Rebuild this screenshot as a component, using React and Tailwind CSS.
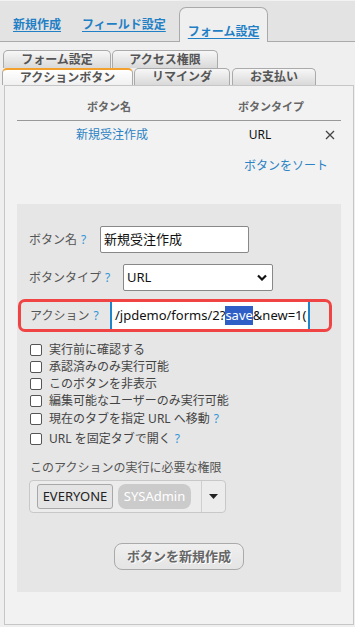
import React from "react";

function Help() {
  return <span className="text-[#2f95d6] ml-[4px]">?</span>;
}

function Check({ children, h }) {
  return (
    <div className={`flex items-center ${h}`}>
      <span className="w-[12px] h-[12px] border border-[#555] rounded-[2px] bg-white shrink-0" />
      <span className="ml-[7px] text-[12px] leading-[16px] text-[#444]">{children}</span>
    </div>
  );
}

export default function App() {
  return (
    <div className="w-[355px] h-[627px] bg-[#efefef] font-['Noto_Sans','Noto_Sans_CJK_JP',sans-serif] overflow-hidden">
      {/* top tabs */}
      <div className="h-[42px] bg-[#e3e3e3] border-b border-[#aaa] border-t border-t-[#f2f2f2] flex items-start">
        <span className="ml-[13px] mt-[16px] text-[12px] leading-[16px] font-bold text-[#1f80c6] underline underline-offset-2">新規作成</span>
        <span className="ml-[21px] mt-[16px] text-[12px] leading-[16px] font-bold text-[#1f80c6] underline underline-offset-2">フィールド設定</span>
        <div className="ml-[13px] mt-[6px] w-[89px] h-[35px] bg-[#efefef] border border-b-0 border-[#aaa] rounded-t-[7px] pl-[8px] pt-[10px]">
          <span className="text-[12px] leading-[16px] font-bold text-[#1f80c6] underline underline-offset-2">フォーム設定</span>
        </div>
      </div>

      {/* sub tabs */}
      <div className="mt-[8px] flex pl-[3px]">
        <div className="w-[108px] h-[18px] border border-b-0 border-[#aaa] rounded-t-[5px] bg-gradient-to-b from-[#f7f7f7] to-[#d9d9d9] flex items-center justify-center text-[12px] font-bold text-[#555] leading-none">フォーム設定</div>
        <div className="ml-[1px] w-[106px] h-[18px] border border-b-0 border-[#aaa] rounded-t-[5px] bg-gradient-to-b from-[#f7f7f7] to-[#d9d9d9] flex items-center justify-center text-[12px] font-bold text-[#555] leading-none">アクセス権限</div>
      </div>
      <div className="flex pl-[2px]">
        <div className="w-[131px] h-[17px] border border-b-0 border-[#aaa] border-t-2 border-t-[#f2a12e] rounded-t-[5px] bg-gradient-to-b from-[#ffffff] to-[#f0f0f0] flex items-center justify-center text-[12px] font-bold text-[#555] leading-none">アクションボタン</div>
        <div className="ml-[1px] w-[96px] h-[17px] border border-b-0 border-[#aaa] rounded-t-[5px] bg-gradient-to-b from-[#f7f7f7] to-[#d9d9d9] flex items-center justify-center text-[12px] font-bold text-[#555] leading-none">リマインダ</div>
        <div className="ml-[2px] w-[84px] h-[17px] border border-b-0 border-[#aaa] rounded-t-[5px] bg-gradient-to-b from-[#f7f7f7] to-[#d9d9d9] flex items-center justify-center text-[12px] font-bold text-[#555] leading-none">お支払い</div>
      </div>

      {/* panel */}
      <div className="ml-[4px] w-[350px] h-[540px] border border-[#c6c6c6] bg-[#f2f2f2]">
        <div className="mx-[12px]">
          <div className="flex pt-[13px] pb-[6px] border-b border-[#999] text-[11px] leading-[15px] font-bold text-[#666]">
            <div className="w-[184px] text-center">ボタン名</div>
            <div className="w-[140px] text-center">ボタンタイプ</div>
          </div>
          <div className="flex items-center pt-[6px] text-[12px] leading-[16px]">
            <div className="w-[184px] pl-[6px] text-center text-[#2b82c4]">新規受注作成</div>
            <div className="w-[118px] text-center text-[#111]">URL</div>
            <div className="w-[22px] flex justify-center">
              <svg width="10" height="10" viewBox="0 0 10 10"><path d="M1 1 L9 9 M9 1 L1 9" stroke="#444" strokeWidth="1.3" /></svg>
            </div>
          </div>
          <div className="mt-[15px] pr-[13px] text-right text-[12px] leading-[16px] text-[#2b82c4]">ボタンをソート</div>

          {/* form box */}
          <div className="mt-[30px] bg-[#e6e6e6] h-[388px] pt-[22px]">
            <div className="flex items-center pl-[12px]">
              <span className="w-[71px] text-[12px] text-[#555]">ボタン名<Help /></span>
              <div className="w-[149px] h-[27px] bg-white border border-[#888] rounded-[2px] pl-[3px] flex items-center text-[13px] text-[#111]">新規受注作成</div>
            </div>
            <div className="flex items-center pl-[12px] mt-[11px]">
              <span className="w-[94px] text-[12px] text-[#555]">ボタンタイプ<Help /></span>
              <div className="w-[150px] h-[27px] bg-white border border-[#888] rounded-[2px] pl-[3px] pr-[5px] flex items-center justify-between text-[13px] text-[#111]">
                <span>URL</span>
                <svg width="10" height="7" viewBox="0 0 10 7"><polyline points="1,1.5 5,5.5 9,1.5" fill="none" stroke="#111" strokeWidth="2.2" /></svg>
              </div>
            </div>
            <div className="ml-[1px] mt-[8px] w-[314px] h-[33px] border-[3px] border-[#f04444] rounded-[7px] flex items-stretch">
              <span className="w-[89px] pl-[9px] flex items-center text-[12px] text-[#555]">アクション<Help /></span>
              <div className="w-[200px] bg-white border-x-2 border-[#1f86cc] pl-[3px] overflow-hidden whitespace-nowrap flex items-center text-[13px] text-[#111]">
                /jpdemo/forms/2?<span className="bg-[#2f5fc6] text-white">save</span>&amp;new=1(
              </div>
            </div>

            <div className="mt-[9px] pl-[13px]">
              <Check h="h-[17px]">実行前に確認する</Check>
              <Check h="h-[17px]">承認済みのみ実行可能</Check>
              <Check h="h-[17px]">このボタンを非表示</Check>
              <Check h="h-[17px]">編集可能なユーザーのみ実行可能</Check>
              <Check h="h-[19px]">現在のタブを指定 URL へ移動<Help /></Check>
              <Check h="h-[21px]">URL を固定タブで開く<Help /></Check>
            </div>

            <div className="mt-[11px] pl-[13px] text-[12px] leading-[16px] text-[#555]">このアクションの実行に必要な権限</div>
            <div className="ml-[12px] mt-[4px] w-[197px] h-[33px] border border-[#c8c8c8] rounded-[4px] bg-[#ececec] flex items-center">
              <div className="ml-[7px] h-[25px] w-[76px] border border-[#a8a8a8] rounded-[3px] bg-[#e4e4e4] flex items-center justify-center text-[13px] text-[#222]">EVERYONE</div>
              <div className="ml-[5px] h-[25px] w-[73px] rounded-[8px] bg-[#cbcbcb] flex items-center justify-center text-[13px] text-white">SYSAdmin</div>
              <div className="ml-[10px] h-full border-l border-[#cfcfcf] flex-1 flex items-center justify-center">
                <svg width="9" height="5" viewBox="0 0 9 5"><polygon points="0,0 9,0 4.5,5" fill="#222" /></svg>
              </div>
            </div>

            <div className="mt-[30px] flex justify-center">
              <div className="w-[130px] h-[27px] border border-[#aaa] rounded-[8px] bg-gradient-to-b from-[#efefef] to-[#e4e4e4] flex items-center justify-center text-[13px] font-bold text-[#666] [text-shadow:1px_1px_0_#fff]">ボタンを新規作成</div>
            </div>
          </div>
        </div>
      </div>
    </div>
  );
}
